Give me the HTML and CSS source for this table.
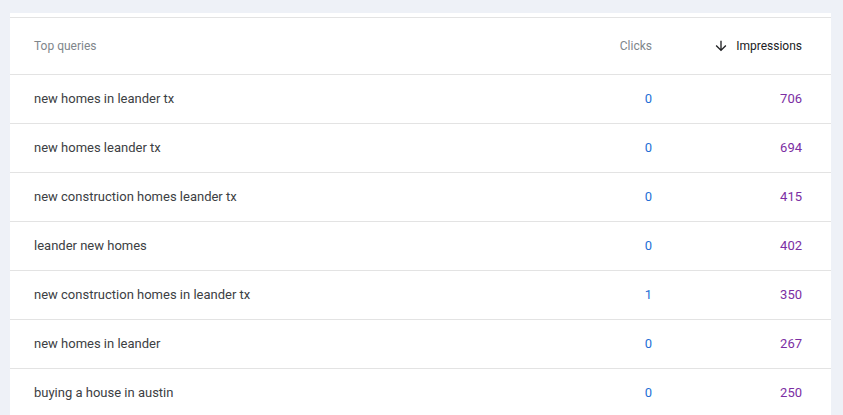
FILE: index.html
```html
<!DOCTYPE html>
<html>
<head>
<meta charset="utf-8">
<link rel="stylesheet" href="styles.css">
</head>
<body>
<div class="card">
  <div class="table">
    <div class="row head">
      <div class="q">Top queries</div>
      <div class="num">Clicks</div>
      <div class="num sorted"><svg class="arrow" width="16" height="16" viewBox="0 0 24 24"><path d="M20 12l-1.41-1.41L13 16.17V4h-2v12.17l-5.58-5.59L4 12l8 8 8-8z" fill="#202124"/></svg>Impressions</div>
    </div>
    <div class="row"><div class="q">new homes in leander tx</div><div class="num clicks">0</div><div class="num imps">706</div></div>
    <div class="row"><div class="q">new homes leander tx</div><div class="num clicks">0</div><div class="num imps">694</div></div>
    <div class="row"><div class="q">new construction homes leander tx</div><div class="num clicks">0</div><div class="num imps">415</div></div>
    <div class="row"><div class="q">leander new homes</div><div class="num clicks">0</div><div class="num imps">402</div></div>
    <div class="row"><div class="q">new construction homes in leander tx</div><div class="num clicks">1</div><div class="num imps">350</div></div>
    <div class="row"><div class="q">new homes in leander</div><div class="num clicks">0</div><div class="num imps">267</div></div>
    <div class="row"><div class="q">buying a house in austin</div><div class="num clicks">0</div><div class="num imps">250</div></div>
  </div>
</div>
</body>
</html>
```
FILE: styles.css
```css
html, body {
  margin: 0;
  padding: 0;
  background: #eef1f7;
  font-family: Roboto, "Liberation Sans", sans-serif;
  overflow: hidden;
}
body {
  padding: 13px 12px 0 10px;
}
.card {
  background: #fff;
  padding-top: 4px;
}
.table {
  border-top: 1px solid #e3e3e3;
}
.row {
  display: grid;
  grid-template-columns: 1fr 120px 150px;
  align-items: center;
  height: 48px;
  padding: 0 29px 2px 24px;
  box-sizing: border-box;
  height: 49px;
  border-bottom: 1px solid #e3e3e3;
  font-size: 13px;
  color: #3c4043;
}
.row.head {
  height: 57px;
  padding-bottom: 1px;
  font-size: 12px;
  color: #80868b;
}
.num {
  text-align: right;
}
.sorted {
  color: #202124;
  display: flex;
  justify-content: flex-end;
  align-items: center;
}
.arrow {
  margin-right: 7px;
}
.clicks {
  color: #1f6fd6;
}
.imps {
  color: #7b2ea3;
}
```
